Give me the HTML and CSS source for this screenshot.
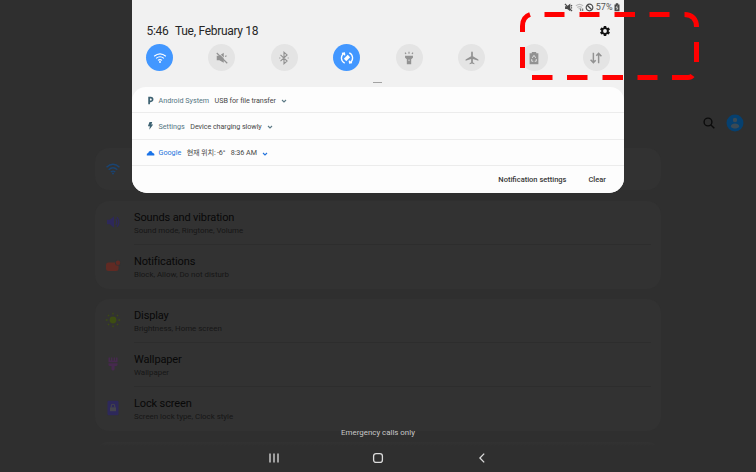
FILE: index.html
```html
<!DOCTYPE html>
<html lang="en">
<head>
<meta charset="utf-8">
<title>Settings</title>
<link rel="stylesheet" href="styles.css">
</head>
<body>
<div class="screen">
  <header class="topbar">
    <svg class="search" viewBox="0 0 12 12"><circle cx="5" cy="5" r="3.900"/><path d="M7.700 7.700 11.300 11.300"/></svg>
    <svg class="avatar" viewBox="0 0 18 18"><circle class="disc" cx="9" cy="9" r="8.500"/><circle cx="9" cy="6" r="2.200"/><path d="M4.700 12.500C5 8.400 13 8.400 13.300 12.500 11.500 15.300 6.500 15.300 4.700 12.500Z"/></svg>
  </header>
  <main class="list">
    <section class="card card-wifi">
      <div class="item">
        <svg class="ico" viewBox="0 0 16 16"><g class="wifi"><path d="M1.500 6.200Q8 .5 14.500 6.200M3.700 8.700Q8 5 12.300 8.700M5.800 11Q8 9.200 10.200 11"/><circle cx="8" cy="12.500" r="1"/></g></svg>
      </div>
    </section>
    <section class="card">
      <div class="item">
        <svg class="ico sound" viewBox="0 0 16 16"><path d="M2 5.700H5L9 2.300V13.700L5 10.300H2Z"/><path class="line" d="M10.700 5.200Q12.700 8 10.700 10.800M12 3.200Q15.800 8 12 12.800"/></svg>
        <div class="copy"><h2>Sounds and vibration</h2><p>Sound mode, Ringtone, Volume</p></div>
      </div>
      <div class="item">
        <svg class="ico notif" viewBox="0 0 16 16"><rect x="1" y="4.500" width="12.500" height="8.500" rx="2.500"/><circle class="gap" cx="13" cy="4.700" r="3"/><circle cx="13" cy="4.700" r="2.200"/></svg>
        <div class="copy"><h2>Notifications</h2><p>Block, Allow, Do not disturb</p></div>
      </div>
    </section>
    <section class="card">
      <div class="item">
        <svg class="ico sun" viewBox="0 0 16 16"><circle cx="8" cy="8" r="3.400"/><path class="line" d="M8 .8V2.500M8 13.500V15.200M.8 8H2.500M13.500 8H15.200M2.900 2.900 4.100 4.100M11.900 11.900 13.100 13.100M2.900 13.100 4.100 11.900M11.900 4.100 13.100 2.900"/></svg>
        <div class="copy"><h2>Display</h2><p>Brightness, Home screen</p></div>
      </div>
      <div class="item">
        <svg class="ico brush" viewBox="0 0 16 16"><path d="M3.500 1.500H5V4.500H6V1.500H7.300V4.500H8.700V1.500H10V4.500H11V1.500H12.500V6.300H3.500ZM3.500 7.300H12.500V9Q12.500 10 11.500 10H9.600V13Q9.600 14.500 8 14.500T6.400 13V10H4.500Q3.500 10 3.500 9Z"/></svg>
        <div class="copy"><h2>Wallpaper</h2><p>Wallpaper</p></div>
      </div>
      <div class="item">
        <svg class="ico lock" viewBox="0 0 16 16"><rect x="2.500" y=".7" width="11" height="14.600" rx="1.200"/><path class="cut" d="M5 7.300H11V11.200H5Z"/><path class="shackle" d="M6.300 7.500V5.700Q6.300 4.200 8 4.200T9.700 5.700V7.500"/></svg>
        <div class="copy"><h2>Lock screen</h2><p>Screen lock type, Clock style</p></div>
      </div>
    </section>
    <section class="card card-next"></section>
  </main>

  <footer class="bottom">
    <div class="carrier">Emergency calls only</div>
    <nav class="nav">
      <svg viewBox="0 0 12 12"><path d="M2 1.500V10.500M6 1.500V10.500M10 1.500V10.500"/></svg>
      <svg viewBox="0 0 12 12"><rect x="1.600" y="1.600" width="8.800" height="8.800" rx="2.500"/></svg>
      <svg viewBox="0 0 12 12"><path d="M8.200 1.600 3.900 6 8.200 10.400"/></svg>
    </nav>
  </footer>

  <aside class="shade">
    <div class="status">
      <svg viewBox="0 0 10 10"><path class="f" d="M1.200 3.500H3.500L7 .6V9.200L3.500 6.800H1.200Z"/><path d="M1 1 9 9M7.500 3.500 9 2.500M7.800 5.500H9"/></svg>
      <svg class="faint" viewBox="0 0 10 10"><path d="M1 3.200Q5 0 9 3.200M2.500 5Q5 3 7.500 5M4 6.700Q5 6 6 6.700"/><path class="mark" d="M6.300 6V8.800M8.500 6V8.800"/></svg>
      <svg viewBox="0 0 10 10"><circle cx="5" cy="5" r="3.700"/><path d="M2.500 2.500 7.500 7.500"/></svg>
      <span>57%</span>
      <svg class="batt" viewBox="0 0 6 10"><path class="f" d="M.5 2.600H1.800V1.200H4.200V2.600H5.500V9.300H.5Z"/><path class="w" d="M3.300 3.700 2 5.900H4L2.700 8"/></svg>
    </div>
    <div class="clock">
      <span class="time">5:46</span><span class="date">Tue, February 18</span>
      <svg class="gear" viewBox="0 0 24 24"><path d="M19.430 12.980c.040-.320.070-.640.070-.980s-.030-.660-.070-.980l2.110-1.650a.5.5 0 0 0 .120-.640l-2-3.460a.5.5 0 0 0-.610-.220l-2.490 1a7.300 7.300 0 0 0-1.690-.980l-.380-2.650A.49.490 0 0 0 14 2h-4a.49.490 0 0 0-.490.420l-.380 2.650c-.610.250-1.170.590-1.690.980l-2.490-1a.5.5 0 0 0-.610.220l-2 3.460a.5.5 0 0 0 .120.640l2.110 1.650c-.040.320-.070.650-.070.980s.030.660.070.980l-2.110 1.650a.5.5 0 0 0-.120.640l2 3.460c.120.220.390.300.610.220l2.490-1c.520.400 1.080.730 1.690.980l.380 2.650c.030.240.240.420.490.420h4c.250 0 .460-.180.490-.420l.380-2.650a7.300 7.300 0 0 0 1.690-.980l2.490 1c.230.090.490 0 .610-.220l2-3.460a.5.5 0 0 0-.120-.640zM12 15.800a3.800 3.800 0 1 1 0-7.600 3.800 3.800 0 0 1 0 7.600z"/></svg>
    </div>
    <div class="toggles">
      <div class="tg on"><svg viewBox="0 0 16 16"><path d="M1.300 6Q8 .5 14.700 6M3.500 8.400Q8 4.700 12.500 8.400M5.700 10.700Q8 8.900 10.300 10.700"/><circle class="f" cx="8" cy="12.600" r="1.100"/></svg></div>
      <div class="tg"><svg viewBox="0 0 16 16"><path class="f" d="M2 5.500H5L10 2V13.500L5 10.500H2Z"/><path class="slash" d="M3 1.200 15 12.900"/><path d="M2 2.300 14 14M11.500 6.300 13.200 5.300"/></svg></div>
      <div class="tg"><svg viewBox="0 0 16 16"><path d="M4 4.500 11.500 11.500 8 14.500V1.500L11.500 4.500 4 11.500M2.600 8H3.800M12.200 8H13.400"/></svg></div>
      <div class="tg on"><svg viewBox="0 0 16 16"><path class="turn" d="M5.400 13.800A6.300 6.300 0 0 1 4.400 2.800M2.200 2.600 5 2.200 5.400 5M10.600 2.200A6.300 6.300 0 0 1 11.600 13.200M13.800 13.400 11 13.800 10.600 11"/><path class="f" d="M4.400 8.800 8.800 4.200 11.600 7.200 7.200 11.800Z"/></svg></div>
      <div class="tg"><svg viewBox="0 0 16 16"><path class="f" d="M3.500 5.500H12.500V7.700L10.500 9.500V15H5.500V9.500L3.500 7.700Z"/><path d="M8 .8V3M3.500 1.800 4.600 3.500M12.500 1.800 11.400 3.500"/><path class="hole" d="M8 9.700V11.500"/></svg></div>
      <div class="tg"><svg viewBox="0 0 16 16"><path class="f" d="M7 2Q7 .7 8 .7T9 2V6L15.300 9.700V11L9 9.200V12.800L10.800 14.200V15.200L8 14.400 5.200 15.200V14.200L7 12.800V9.200L.7 11V9.700L7 6Z"/></svg></div>
      <div class="tg"><svg viewBox="0 0 16 16"><path class="f" d="M3 2.700H5.500V1H10.500V2.700H13V15H3Z"/><path class="hole" d="M6 7.800 8 5 10 7.800M5.400 9.300 5.400 11.700H7.200M10.600 9.300V11.700H8.800"/></svg></div>
      <div class="tg"><svg viewBox="0 0 16 16"><path class="arrows" d="M5 2V13M1.800 10 5 13.300 7.700 10.500M11 14V3M8.300 5.500 11 2.700 14.200 6"/></svg></div>
    </div>
    <div class="handle"></div>
    <div class="notes">
      <div class="note"><svg class="app" viewBox="0 0 9 9"><path class="pmark" d="M3.100 8.200V1.700H4.800A1.700 1.700 0 0 1 4.800 5.300H3.100"/></svg><span class="name">Android System</span><span>USB for file transfer</span><svg class="chev" viewBox="0 0 6 6"><path d="M1 2 3 4 5 2"/></svg></div>
      <div class="note"><svg class="app" viewBox="0 0 9 9"><path d="M3.500 0 6.200 0 5.400 2.600 7.200 2.600 3.300 7.800 3.800 4.300 1.900 4.300Z"/></svg><span class="name">Settings</span><span>Device charging slowly</span><svg class="chev" viewBox="0 0 6 6"><path d="M1 2 3 4 5 2"/></svg></div>
      <div class="note google"><svg class="app" viewBox="0 0 9 9"><path d="M.8 6.500Q.2 4.100 2.200 3.900 2.700 1.900 4.600 2 6.200 2.100 6.600 3.900 8.900 4.200 8.300 6.500Z"/></svg><span class="name">Google</span><span class="place">현재 위치: -6°</span><span>8:36 AM</span><svg class="chev" viewBox="0 0 6 6"><path d="M1 2 3 4 5 2"/></svg></div>
      <div class="actions"><span>Notification settings</span><span>Clear</span></div>
    </div>
  </aside>

  <svg class="callout" viewBox="0 0 180 70"><path d="M2.500 20V14Q2.500 5 10 2.500M24.500 2.500H44.500M59.500 2.500H79.500M94.500 2.500H115M129.500 2.500H149.500M164.500 2.500C172 2.500 176.500 7 176.500 15M176.500 30V50M172.500 63.500Q171 65.500 168 65.500H152M137.500 65.500H117.500M103 65.500H82.500M67.500 65.500H47M32.500 65.500H12M2.500 56V35"/></svg>
</div>
</body>
</html>
```

FILE: styles.css
```css
* { box-sizing: border-box; }
body {
  margin: 0;
  background: #2f2f2f;
  font-family: Roboto, "Noto Sans CJK KR", sans-serif;
}
.screen {
  position: relative;
  width: 756px;
  height: 472px;
  overflow: hidden;
}
svg { display: block; flex: none; }

/* settings page behind the shade */
.topbar {
  display: flex;
  justify-content: flex-end;
  align-items: center;
  height: 148px;
  padding: 98px 12.500px 0 0;
  gap: 11px;
}
.search { width: 12px; height: 12px; fill: none; stroke: #0b0b0b; stroke-width: 1.4; }
.avatar { width: 18px; height: 18px; fill: #3a4a55; }
.avatar .disc { fill: #06406f; }
.list {
  display: flex;
  flex-direction: column;
  gap: 10.500px;
  width: 566px;
  margin-left: 95px;
}
.card { background: #323232; border-radius: 14px; }
.card-wifi { height: 42px; }
.card-next { height: 14px; border-radius: 14px 14px 0 0; background: linear-gradient(#323232, #2f2f2f 4px); }
.item {
  display: grid;
  grid-template-columns: 16px 1fr;
  column-gap: 13px;
  height: 44px;
  padding: 0 10px;
}
.card-wifi .item { height: 42px; }
.ico { width: 16px; height: 16px; margin-top: 13px; }
.copy { padding-top: 10px; border-bottom: 1px solid #2d2d2d; }
.item:last-child .copy { border-bottom: 0; }
.card h2 {
  margin: 0;
  font-size: 11px;
  line-height: 14px;
  font-weight: 400;
  letter-spacing: -.13px;
  color: #080808;
}
.card p {
  margin: 0;
  font-size: 7.900px;
  line-height: 11px;
  color: #161616;
}
.wifi { fill: none; stroke: #1a4472; stroke-width: 1.4; }
.wifi circle { fill: #1a4472; stroke: none; }
.line { fill: none; stroke-width: 1.3; }
.sound { fill: #2d285a; stroke: none; }
.sound .line { stroke: #2d285a; }
.notif { fill: #602a23; }
.notif .gap { fill: #323232; }
.sun { fill: #3d4d12; }
.sun .line { stroke: #3d4d12; }
.brush { fill: #46294e; }
.lock { fill: #2d285a; }
.lock .cut { fill: #44444c; }
.lock .shackle { fill: none; stroke: #44444c; stroke-width: 1.1; }

/* navigation */
.bottom {
  position: absolute;
  left: 0;
  right: 0;
  bottom: 0;
  height: 46px;
}
.carrier {
  height: 14px;
  line-height: 14px;
  text-align: center;
  font-size: 7.900px;
  color: #c8c8c8;
}
.nav { display: flex; justify-content: center; gap: 92px; padding-top: 12px; }
.nav svg { width: 12px; height: 12px; fill: none; stroke: #dcdcdc; stroke-width: 1.3; }

/* notification shade */
.shade {
  position: absolute;
  left: 132px;
  top: 0;
  width: 492px;
  height: 193px;
  overflow: hidden;
  background: #f1f1f1;
  border-radius: 0 0 15px 15px;
}
.status {
  display: flex;
  justify-content: flex-end;
  align-items: center;
  height: 14px;
  padding-right: 4px;
  color: #555;
  font-size: 9px;
}
.status svg { width: 9px; height: 9px; margin-right: 1.500px; fill: none; stroke: #484848; stroke-width: 1.3; }
.status .f { fill: #484848; stroke: none; }
.status .faint { stroke: #bcbcbc; }
.status .faint .mark { stroke: #777; }
.status .batt { width: 6px; height: 10px; margin: 0 0 0 1.500px; }
.status .w { stroke: #f1f1f1; stroke-width: .7; }
.clock {
  display: flex;
  align-items: center;
  height: 34px;
  padding: 0 13.500px 0 14.500px;
  font-size: 12px;
  line-height: 14px;
  letter-spacing: -.3px;
  color: #262626;
}
.time { width: 28.500px; }
.gear { width: 12px; height: 12px; margin-left: auto; fill: #111; }
.toggles {
  display: flex;
  justify-content: space-between;
  margin-top: -4px;
  padding: 0 14px;
}
.tg {
  display: grid;
  place-items: center;
  width: 27px;
  height: 27px;
  border-radius: 50%;
  background: #e4e4e4;
  color: #929292;
}
.tg.on { background: #4297ff; color: #fff; }
.tg svg { width: 14px; height: 14px; fill: none; stroke: currentColor; stroke-width: 1.3; }
.tg .f { fill: currentColor; stroke: none; }
.tg .slash, .tg .hole { stroke: #e4e4e4; stroke-width: 1.1; }
.tg .turn { stroke-width: 1.5; }
.tg .arrows { stroke-width: 1.700; }
.handle { width: 9px; height: 1px; margin: 11px 0 0 241px; background: #a2a2a2; }
.notes {
  height: 108px;
  margin-top: 4px;
  background: #fdfdfd;
  border-radius: 14px 14px 0 0;
}
.note {
  display: flex;
  align-items: center;
  height: 26.400px;
  padding: 1.800px 0 0 14px;
  border-bottom: 1px solid #ececec;
  font-size: 7.200px;
  line-height: 10px;
  letter-spacing: -.06px;
  color: #484848;
  white-space: nowrap;
}
.app { width: 9px; height: 9px; margin-right: 3.500px; fill: #3e6272; }
.app .pmark { fill: none; stroke: #3e6272; stroke-width: 1.7; }
.name { margin-right: 5.500px; letter-spacing: 0; color: #547683; }
.place { margin-right: 5.500px; letter-spacing: -.2px; }
.chev { width: 6px; height: 6px; margin: 1px 0 0 5px; fill: none; stroke: #5d7a86; stroke-width: 1.1; }
.google .name { color: #2474dc; }
.google .app { fill: #1a73e8; }
.google .chev { stroke: #2474dc; }
.actions {
  display: flex;
  justify-content: flex-end;
  align-items: center;
  gap: 22px;
  height: 26px;
  padding-right: 18px;
  font-size: 7.500px;
  font-weight: 500;
  color: #383838;
}

/* highlighted area */
.callout {
  position: absolute;
  left: 520px;
  top: 12px;
  width: 180px;
  height: 70px;
  fill: none;
  stroke: #f00;
  stroke-width: 5;
}
```
